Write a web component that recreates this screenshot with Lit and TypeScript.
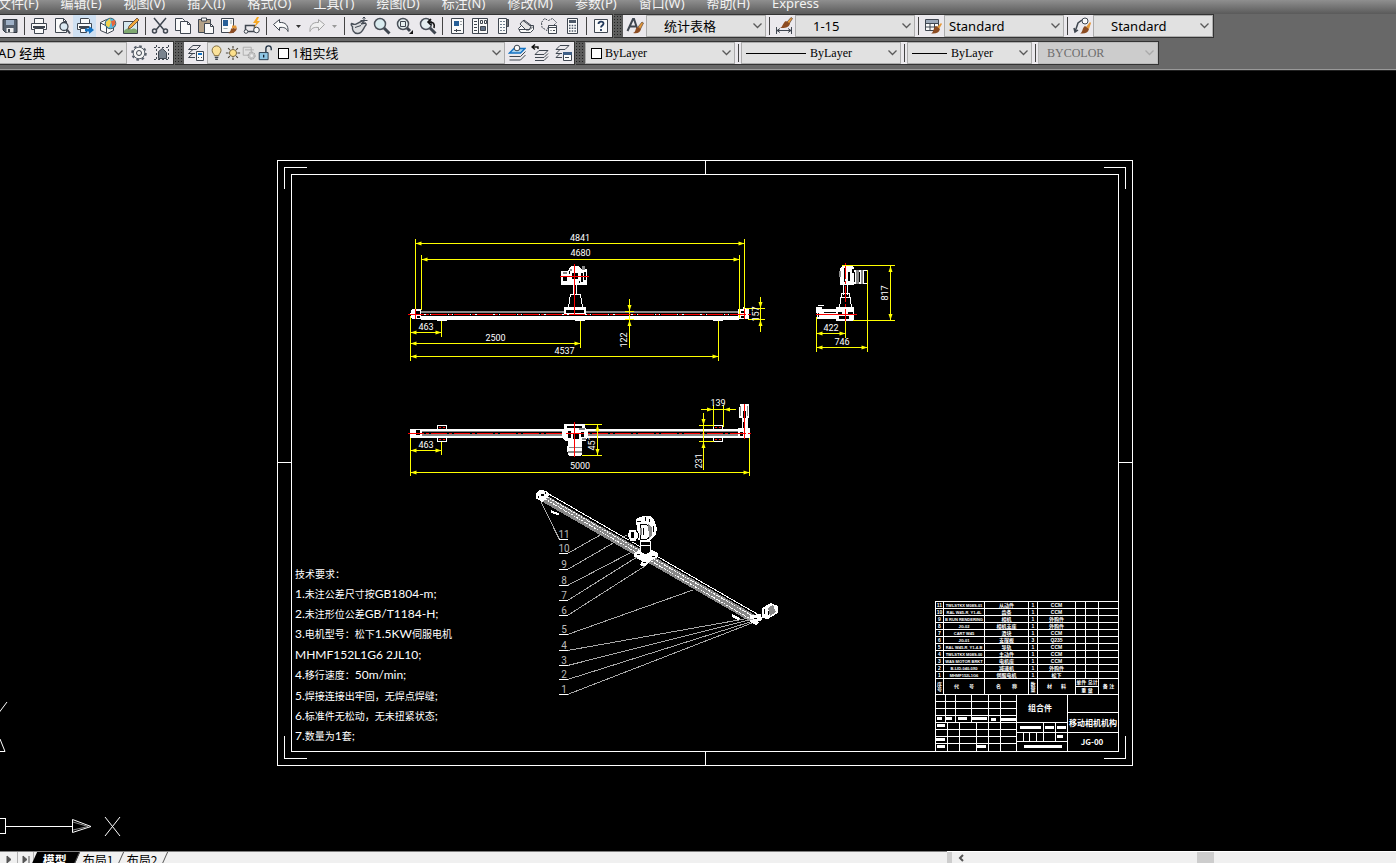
import { LitElement, html, svg, css } from "lit";
import { customElement, property } from "lit/decorators.js";

const icons: Record<string, unknown> = {
  save: svg`<path class="ink" d="M2 2.500h14v13H4.500L2 13z"/><path fill="#9fb0c6" d="M5 3h8v5H5z"/><path fill="#eee" d="M5.500 11h7v4.500h-7z"/><path fill="#3f4650" d="M7 12h2v3H7z"/>`,
  print: svg`<path class="paper" d="M4.500 6V1.500h9V6"/><path class="paper" d="M1.500 6.500h15v6h-15z"/><path fill="#3f4650" d="M3 9h12v2H3z"/><path class="paper" d="M4.500 11.500h9v5h-9z"/>`,
  preview: svg`<path class="paper" d="M2.500 1.500h8l3 3v11h-11z"/><path class="line" d="M10.500 1.500v3h3"/><circle cx="11" cy="9.500" r="4" fill="#dceaf3" stroke="#3f4650" stroke-width="1.300"/><path class="line thick" d="M14 12.500l3 4"/>`,
  publish: svg`<path class="paper" d="M4.500 6V1.500h8l1 1V6"/><path class="paper" d="M1.500 6.500h14v6h-14z"/><path fill="#3f4650" d="M3 9h10v2H3z"/><path class="paper" d="M4.500 11.500h6v4h-6z"/><path fill="#1473c4" d="M9 11.500h4V9l5 4-5 4v-2.500H9z"/>`,
  globe: svg`<path class="paper" d="M1.500 5.500l6-3 7 3v8l-6 3-7-3z"/><path class="line" d="M1.500 6l6 3v7"/><circle cx="11.500" cy="6.500" r="5.300" fill="#55b9df" stroke="#37606f"/><path fill="#f3d24b" d="M7 5l4-3.500 1 4-2 5-3-2z"/><path fill="#e8663c" d="M12 4l4-1 .5 4-3 3z"/>`,
  markup: svg`<path fill="#d5e8ef" stroke="#3f4650" d="M1.500 4.500h14v12h-14z"/><path fill="#7fa870" d="M2 14c3-4 6-1 8-2s4 0 5 1v3H2z"/><path fill="#f2a83b" stroke="#5b4434" stroke-width=".8" d="M6 12l1-3 8-8 2 2-8 8z"/>`,
  cut: svg`<path class="line mid" d="M3 1l10 12M15 1L5 13"/><circle class="line mid" cx="3.500" cy="14" r="2"/><circle class="line mid" cx="14.500" cy="14" r="2"/>`,
  copy: svg`<path class="paper" d="M1.500 1.500h7l2 2v10h-9z"/><path class="paper" d="M6.500 4.500h7l3 3v9h-10z"/><path class="line" d="M13.500 4.500v3h3"/>`,
  paste: svg`<path fill="#b3a187" stroke="#3f4650" d="M1.500 2.500h12v13h-12z"/><path class="paper" d="M4.500 1h5v3h-5z"/><path class="paper" d="M7.500 6.500h6l3 3v7h-9z"/><path class="line" d="M13.500 6.500v3h3"/>`,
  match: svg`<path class="paper" d="M1.500 1.500h12v14h-12z"/><path fill="#285f97" d="M3 3h5v6H3z"/><path stroke="#9aa" d="M10 4h2M10 6h2M3.500 11.500h4"/><path fill="#e59a3a" d="M12 8.500h4l1 3h-5z"/><path fill="#8d4c22" d="M11 11.500h6c-1 4-5 5.500-9 4.500 2-1 3-2 3-4.500z"/>`,
  block: svg`<path class="line mid" d="M2.500 8.500h9v6h-9z"/><circle class="paper" cx="3" cy="14.500" r="1.800"/><circle class="paper" cx="13.500" cy="13" r="2.800"/><path fill="#f7a823" d="M14 0l-4 6h3l-2 5 6-7h-3l2-4z"/>`,
  undo: svg`<path class="paper" d="M1.500 7.500l6-5v3c6-.5 9 3 8.500 9-1.500-3.500-4-4.500-8.500-4v3z"/>`,
  redo: svg`<path fill="#efefef" stroke="#a3a3a3" d="M16.500 7.500l-6-5v3c-6-.5-9 3-8.500 9 1.500-3.500 4-4.500 8.500-4v3z"/>`,
  pan: svg`<path fill="#dcdde0" stroke="#4a5059" stroke-width="1.400" d="M1.500 6.500c2 1 3 1.500 4.500 .5l6-3c2 0 1.500 2-1 3 3-1 6-1 5 1-3 3-3 8.500-8.500 8.500-4 0-5.500-4-5-7-1.500-1-1.500-2.500-1-3z"/><path class="line" d="M5 10.500l6-2M10.500 3.500h7M14 0v7M12.500 1.500L14 0l1.500 1.500M12.500 5.500L14 7l1.500-1.500"/>`,
  zoom: svg`<path class="line fat" d="M10.500 10.500l6 6"/><circle cx="7" cy="7" r="5.500" fill="#d9ebef" stroke="#4a5059" stroke-width="1.500"/>`,
  zoomwin: svg`<path class="line fat" d="M10 10l4 4"/><circle cx="7" cy="7" r="5.500" fill="#e5eef0" stroke="#4a5059" stroke-width="1.500"/><path class="line" d="M4.500 4.500h5v5h-5z"/><path fill="#111" d="M17 13v4h-4z"/>`,
  zoomprev: svg`<path class="line fat" d="M10.500 10.500l6 6"/><circle cx="7" cy="7" r="5.500" fill="#e5eef0" stroke="#4a5059" stroke-width="1.500"/><path fill="none" stroke="#111" stroke-width="1.600" d="M12 2L9 5l3 3M9.500 5c5-.5 6.500 2 5.500 6"/>`,
  props: svg`<path class="paper" d="M3.500 1.500h12v15h-12z"/><path fill="#285f97" d="M6 4h5v5H6z"/><path class="line" d="M12.500 4.500h1M12.500 7.500h1M6 13.500h7M8.500 12v3"/>`,
  palette: svg`<path class="paper" d="M1.500 1.500h15v15h-15z"/><path class="line" d="M7.500 1.500v15M3 4.500h3M3 7.500h3M3 10.500h3M3 13.500h3M9.500 3.500h2v3h-2zM13.500 3.500h2v3h-2z"/><path fill="#5f7088" stroke="#3f4650" d="M9.500 9.500h5v4h-5z"/>`,
  tool: svg`<path class="paper" d="M4.500 1.500h8v15h-8z"/><path stroke="#71808f" stroke-dasharray="2 1" fill="none" d="M6 4.500h5M6 7.500h5M6 10.500h5M6 13.500h5"/><path fill="#777" stroke="#3f4650" d="M12.500 2.500h2v7h-2z"/>`,
  sheet: svg`<path class="paper" d="M1.500 11.500l3-3h12v4l-3 3h-10z"/><path fill="#e4e4e4" stroke="#3f4650" d="M3 7l3-3.500 8 6-2 3.500H9z"/><path class="line" d="M6 4l1-1 8 6M2 12.500h7l4 0 3-3"/>`,
  block2: svg`<path fill="none" stroke="#3f4650" stroke-dasharray="2 1" d="M1.500 5.500l3-4 4 2 4-2 4 4-3 3H9l-2 5-5-3z"/><path class="paper" d="M8.500 8.500h8v8h-8z"/><path class="line" d="M8.500 10.500h8M10.500 13.500h1M13 13.500h2"/>`,
  calc: svg`<path class="paper" d="M4.500 1.500h10v15h-10z"/><path fill="#4d5868" d="M6 3h7v3H6z"/><path fill="none" stroke="#4d5868" stroke-width="1.500" stroke-dasharray="1.500 1.200" d="M6 8.500h7M6 11.200h7M6 14h7"/>`,
  help: svg`<path class="paper" d="M2.500 2.500h13v13h-13z"/><path fill="none" stroke="#243a5c" stroke-width="1.800" d="M6.500 7c0-3 5-3 5-.5 0 2-2.500 2-2.500 4M9 12v2"/>`,
  style: svg`<path class="line thick" d="M1.500 14L7 2h1l3 9M3.500 9.500h6"/><path fill="#e59a3a" stroke="#5b4434" stroke-width=".7" d="M12 10l4-5 1.500 1-3 6z"/><path fill="#8d4c22" d="M11 10l4 2c-1 4-4 5-8 4 3-1 2-4 4-6z"/>`,
  dim: svg`<path class="line" d="M1.500 10v7M16.500 10v7M2 13.500h14M5 11.500l-3 2 3 2M13 11.500l3 2-3 2"/><path fill="#e59a3a" stroke="#5b4434" stroke-width=".7" d="M12 5l4-4.500 1.500 1L14 7z"/><path fill="#8d4c22" d="M11 4l4 2.500c-1 4-5 5-10 4.500 3-1 3-6 6-7z"/>`,
  table: svg`<path class="paper" d="M1.500 2.500h13v11h-13z"/><path fill="#9ca8b8" d="M2 3h12v3H2z"/><path class="line" d="M1.500 6.500h13M1.500 10h13M6 6v7M10.500 6v7"/><path fill="#e59a3a" d="M13 10l4-4 1 1-3 5z"/><path fill="#8d4c22" d="M12 9l4 3c-1 4-4 5-9 4.500 3-1 2-6 5-7.500z"/>`,
  leader: svg`<path class="line mid" d="M2 15l3-9 4-3M1 11l1 4 3-2"/><circle class="paper" cx="12" cy="4" r="3"/><path fill="#e59a3a" d="M13 10l4-5 1 1-2 6z"/><path fill="#8d4c22" d="M12 9l4 3c-1 4-4 5-9 4.500 3-1 2-6 5-7.500z"/>`,
  gear: svg`<circle cx="9" cy="9" r="6.800" fill="none" stroke="#59616c" stroke-width="2" stroke-dasharray="2.600 2.740"/><circle cx="9" cy="9" r="5.800" fill="#f4f4f4" stroke="#59616c"/><circle class="line" cx="9" cy="9" r="2.500"/>`,
  space: svg`<path fill="none" stroke="#3f4650" stroke-dasharray="2 2" d="M1 3.500h16M1 15.500h16M3.500 1v16M15.500 1v16"/><path fill="#7a838e" stroke="#3f4650" d="M5.500 14.500v-7l4-3 4 4v6z"/>`,
  layerprops: svg`<path class="line" d="M6 1.500L1.500 5.500h8l4-4zM6 5.500L1.500 9.500H8M6 9.500l-4.500 4H8"/><path class="paper" d="M9.500 7.500h7v9h-7z"/><path fill="#1473c4" d="M11 9h4v2h-4z"/><path class="line" d="M11 13.500h1M14 13.500h1"/>`,
  bulb: svg`<path fill="#fbe29a" stroke="#75602e" d="M6 12c0-2-2.500-3-2.500-6a5 5 0 0 1 10 0c0 3-2.500 4-2.500 6z"/><path class="line mid" d="M6.500 14h4M7 16h3"/>`,
  sun: svg`<path stroke="#4c463c" stroke-width="1.300" d="M9 1v16M1 9h16M3.500 3.500l11 11M14.500 3.500l-11 11"/><circle cx="9" cy="9" r="5" fill="#ececec"/><circle cx="9" cy="9" r="4" fill="#fce08b" stroke="#655530"/>`,
  freeze: svg`<path fill="none" stroke="#aaa" d="M2.500 2.500h9v9h-9zM4.500 5.500h10"/><circle cx="12" cy="12" r="4" fill="#c4c4c4" stroke="#999" stroke-dasharray="2 1"/><circle cx="12" cy="12" r="1.500" fill="#eee"/>`,
  lock: svg`<path fill="none" stroke="#1e2f40" stroke-width="1.500" d="M10 8V4c0-4 6-4 6 0v2"/><path fill="#8fc6e4" stroke="#1e2f40" d="M2.500 8.500h10v8h-10z"/><path stroke="#102030" stroke-width="1.500" d="M7.500 11v3"/>`,
  laymatch: svg`<path fill="#a9d3f0" stroke="#1473c4" stroke-width="1.400" d="M6 4.500h11l-4.500 4.500h-11z"/><path class="line" d="M1.500 12.500h11l5-5M1.500 16h11l5-5"/><circle class="paper" cx="9" cy="4" r="2.800"/>`,
  layprev: svg`<path class="line" d="M8 6.500h9l-4 4H4zM4 13.500h9l4-4M4 16.500h9l4-4"/><path fill="none" stroke="#111" stroke-width="1.400" d="M1 3h6v2M4 .5L1 3l3 2.500"/>`,
  laystate: svg`<path class="line" d="M6 1.500h9l-4 4H2zM6 5.500l-4 4h6M6 9.500l-4 4h6"/><path class="paper" d="M9.500 8.500h8v8h-8z"/><path fill="#3f5f86" d="M9 8h9v3H9z"/><path class="line" d="M11 13.500h4"/>`,
};

const icon = (name: string) =>
  html`<svg class="icon" viewBox="0 0 18 18" aria-hidden="true">${icons[name]}</svg>`;

const iconStyles = css`
  .icon { width: 18px; height: 18px; flex: none; display: block; }
  .ink { fill: #56606e; stroke: #30363e; }
  .paper { fill: #fafafa; stroke: #3f4650; }
  .line { fill: none; stroke: #3f4650; }
  .mid { stroke-width: 1.5; }
  .thick { stroke-width: 2; }
  .fat { stroke-width: 3; }
`;

@customElement("cad-combo")
class CadCombo extends LitElement {
  @property() label = "";
  @property() value = "";
  @property() variant = "";
  @property({ type: Boolean }) disabled = false;

  static styles = css`
    :host { display: flex; box-sizing: border-box; height: 22px; background: #e1e1e1; border: 1px solid #acacac; }
    :host([disabled]) { background: #cccccc; border-color: #bbbbbb; }
    .box { flex: 1; min-width: 0; display: grid; align-items: center; grid-template-columns: auto 1fr; }
    select { grid-area: 1 / 2; min-width: 0; width: 100%; height: 20px; appearance: none; border: 0; margin: 0; padding: 0 20px 0 4px; background: none; color: #000; font: 13px/20px "Noto Sans", "Noto Sans CJK SC", sans-serif; }
    .chevron { grid-area: 1 / 2; justify-self: end; width: 9px; height: 6px; margin-right: 3px; pointer-events: none; fill: none; stroke: #5a5a5a; stroke-width: 1.3; }
    .indent { padding-left: 17px; }
    .inset { padding-left: 8px; }
    .serif { font-family: "Liberation Serif", serif; font-size: 12px; }
    select:disabled { color: #6d6d6d; opacity: 1; }
    :host([disabled]) .chevron { stroke: #aaa; }
  `;

  render() {
    return html`<div class="box">
      <slot></slot>
      <select class=${this.variant} aria-label=${this.label} ?disabled=${this.disabled}><option>${this.value}</option></select>
      <svg class="chevron" viewBox="0 0 9 6"><path d="M.5 .5l4 4 4-4" /></svg>
    </div>`;
  }
}

type Pt = [number, number];

@customElement("cad-drawing")
class CadDrawing extends LitElement {
  static styles = css`
    :host { display: block; background: #000; overflow: hidden; }
    .sheet { display: block; width: 100%; height: 100%; }
    .w { fill: none; stroke: #fff; }
    .g { fill: none; stroke: #8c8c8c; }
    .y { fill: none; stroke: #ff0; }
    .r { fill: none; stroke: #f00; }
    .dash { stroke-dasharray: 16 2 3 2; }
    .dots { stroke-dasharray: 2 1; }
    .fw { fill: #fff; }
    .fg { fill: #888; }
    .fy { fill: #ff0; }
    .fk { fill: #000; }
    .kw { fill: #000; stroke: #fff; }
    .wk { fill: #fff; stroke: #000; }
    .fr { fill: #f00; }
    .crisp { shape-rendering: crispEdges; }
    .dimtext { fill: #fff; font: 9px Roboto, sans-serif; text-anchor: middle; }
    .part { fill: #bbb; font: 10px Roboto, sans-serif; text-anchor: middle; }
    .note { fill: #fff; font: 10px "Noto Sans CJK SC", sans-serif; }
    .latin { font: 12px Lato, sans-serif; }
    .name { fill: #fff; font: bold 8px "Noto Sans CJK SC", sans-serif; text-anchor: middle; }
    .bom { border-collapse: collapse; table-layout: fixed; width: 184px; color: #fff; font: bold 5px/5px "Liberation Sans", "Noto Sans CJK SC", sans-serif; }
    .bom td, .bom th { border: 1px solid #fff; height: 6px; padding: 0; text-align: center; white-space: nowrap; font-weight: bold; }
    .bom td:nth-child(2) { font-size: 4px; }
    .bom tfoot th { height: 7px; }
    .spread { display: flex; justify-content: space-evenly; }
  `;

  private arrow(x: number, y: number, dx: number, dy: number) {
    const px = dy, py = dx;
    return svg`<path class="fy" d="M${x} ${y}L${x + dx * 6 + px * 2} ${y + dy * 6 + py * 2}L${x + dx * 6 - px * 2} ${y + dy * 6 - py * 2}z"/>`;
  }
  private h(x1: number, x2: number, y: number, label: string, ty: number, tx = (x1 + x2) / 2) {
    return svg`<path class="y crisp" d="M${x1} ${y}H${x2}"/>${this.arrow(x1, y, 1, 0)}${this.arrow(x2, y, -1, 0)}
      <text class="dimtext" x=${tx} y=${ty}>${label}</text>`;
  }
  private vtext(x: number, y: number, label: string) {
    return svg`<text class="dimtext" transform="translate(${x} ${y}) rotate(-90)">${label}</text>`;
  }

  private frame() {
    return svg`<g class="w crisp">
      <path d="M277.500 160.500H1132.500V765.500H277.500zM291.500 174.500H1118.500V751.500H291.500z"/>
      <path d="M705.500 160V174M705.500 751V766M277 462.500H291M1118 462.500H1132"/>
      <path d="M284.500 189V167.500H307M1104 167.500H1125.500V189M284.500 736V758.500H307M1104 758.500H1125.500V736"/>
    </g>`;
  }

  private front() {
    return svg`<g>
      <g class="crisp">
        <path class="fg" d="M421 311h318v2H421z"/><path class="fw" d="M421 316h318v4H421zM437 320h10v1H437zM575 320h10v1H575zM713 320h10v1H713z"/>
        <path class="w dots" d="M421 314.500H740"/>
        <path class="fw" d="M412 309h9v10h-9l-2-5zM738 309h5l1-4 2 4h3v10H738z"/><path class="fk" d="M416 311h4v3h-4zM417 316h3v2h-3zM741 311h4v2h-4zM741 316h3v2h-3z"/>
      </g>
      <path class="y crisp" d="M415.500 239V311M744.500 239V311M421.500 255V310M739.500 255V318M410.500 316V361M441.500 321V337M580.500 321V348M718.500 321V361M629.500 299V348M625 311.500H634M625 319.500H634M760.500 297V332M746 308.500H765M748 319.500H765"/>
      ${this.h(415.5, 744.5, 243.5, "4841", 241)}${this.h(421.5, 739.5, 259.5, "4680", 256)}
      ${this.h(410.5, 441.5, 332.5, "463", 330)}${this.h(410.5, 580.5, 343.5, "2500", 341)}${this.h(410.5, 718.5, 356.5, "4537", 354)}
      ${this.arrow(629.5, 311, 0, -1)}${this.arrow(629.5, 320, 0, 1)}${this.arrow(760.5, 308, 0, -1)}${this.arrow(760.5, 320, 0, 1)}
      ${this.vtext(627, 340, "122")}${this.vtext(759, 314, "157")}
      <g class="crisp">
        <path class="fw" d="M561 271h7l3-5h7l3 3h6v16H561z"/><path class="fg" d="M563 272h4v2h-4zM582 266h3v4h-3zM570 269h2v2h-2z"/><path class="fk" d="M563 276h4v5h-4zM581 273h2v9h-2zM584 272h2v8h-2zM572 273h6v6h-6zM569 271h1v3h-1zM579 281h1v2h-1z"/>
        <path class="w" d="M573.500 285V295M576.500 285V295M570.500 294.500H580.500L582.500 307M570.500 294L568.500 307"/>
        <path class="fw" d="M564 307h22v8H564z"/><path class="fk" d="M566 310h18v3H566z"/>
        <path class="r" d="M560 276.500H589M574.500 264V315M415.500 309V319M744.500 309V319"/><path class="r dash" d="M408 314.500H751"/>
      </g>
    </g>`;
  }

  private side() {
    return svg`<g>
      <g class="crisp">
        <path class="fw" d="M840 268l4-3h8l2 3v17H840z"/><path class="fw" d="M854 270h14v14h-14z"/>
        <path class="fk" d="M854 272h1v10h-1zM859 272h1v10h-1zM864 271h3v12h-3z"/>
        <path class="fg" d="M856 270h3v14h-3zM861 270h2v14h-2zM839 271h2v6h-2z"/><path class="fk" d="M844 268h1v14h-1zM848 272h2v9h-2zM852 269h2v4h-2z"/>
        <path class="w" d="M843.500 284V295M847.500 284V295M841.500 293.500H849.500L851.500 307.500H839.500zM840 297.500H851"/>
        <path class="fw" d="M816 307h6v2h14v-2h18v13H836v-1H817z"/><path class="fk" d="M818 313h1v4h-1zM824 312h12v1H824zM838 312h4v3h-4zM848 312h5v3h-5zM839 316h10v3H839z"/>
        <path class="w" d="M818 305.500H824M836 320.500H854"/>
        <path class="r dash" d="M845.500 263V321"/><path class="r" d="M816 314.500H857"/>
      </g>
      <path class="y crisp" d="M842 265.500H895M853 320.500H895M816.500 317V352M845.500 321V338M867.500 270V352M890.500 266V320"/>
      ${this.arrow(890.5, 266, 0, 1)}${this.arrow(890.5, 320, 0, -1)}${this.vtext(888, 293, "817")}
      ${this.h(816.5, 845.5, 333.5, "422", 331)}${this.h(816.5, 867.5, 347.5, "746", 345)}
    </g>`;
  }

  private top() {
    return svg`<g>
      <g class="crisp">
        <path class="fw" d="M421 429h318v2H421zM421 436h318v2H421z"/><path class="fg" d="M421 431h318v1H421zM421 434h318v2H421z"/>
        <path class="fw" d="M410 429h12v9H410zM738 428h12v10H738z"/><path class="fk" d="M416 430h4v5h-4zM740 432h3v4h-3z"/>
        <path class="w" d="M437.500 429V425.500H446.500V429M437.500 438V441.500H446.500V438M713.500 429V425.500H722.500V429M713.500 438V441.500H722.500V438"/>
        <path class="fr" d="M439 427h2v1h-2zM443 427h2v1h-2zM439 439h2v1h-2zM443 439h2v1h-2zM715 427h2v1h-2zM719 427h2v1h-2zM715 439h2v1h-2zM719 439h2v1h-2z"/>
        <path class="r dash" d="M408 433.500H751"/>
        <path class="fw" d="M564 424h21v4l3 2v5l-2 6H566l-4-3v-7l2-1z"/><path class="fk" d="M567 426h15v2H567zM568 431h3v7h-3zM573 434h6v5h-6zM581 432h3v5h-3z"/>
        <path class="fg" d="M579 428h6v2h-6zM582 438h4v2h-4z"/><path class="fw" d="M568 441h14v14h-1v1H569l-2-5z"/><path class="fg" d="M569 447h13v1H569zM568 451h14v2H568z"/>
        <path class="fw" d="M740 404h9v14h-1v11h-6v-11h-3v-7z"/><path class="fk" d="M743 411h3v7h-3zM743 422h1v6h-1z"/><path class="fg" d="M740 406h1v10h-1zM747 406h1v10h-1z"/>
        <path class="r" d="M574.500 422V457M744.500 404V439M566 433.500H584"/>
      </g>
      <path class="y crisp" d="M410.500 438V476M749.500 438V476M441.500 442V455M597.500 425V455M585 424.500H602M582 455.500H602M701 409.500H736M713.500 405V427M723.500 405V427M703.500 413V470M699 425.500H714M699 441.500H714"/>
      ${this.arrow(597.5, 425, 0, 1)}${this.arrow(597.5, 455, 0, -1)}${this.arrow(713, 409.5, -1, 0)}${this.arrow(724, 409.5, 1, 0)}${this.arrow(703.5, 425, 0, -1)}${this.arrow(703.5, 442, 0, 1)}
      ${this.h(410.5, 441.5, 450.5, "463", 448)}${this.h(410.5, 749.5, 472.5, "5000", 469)}
      <text class="dimtext" x="718" y="406">139</text>${this.vtext(595, 443, "451")}${this.vtext(702, 461, "231")}
    </g>`;
  }

  private iso() {
    const parts: [string, number, Pt][] = [
      ["11", 539.5, [541, 502]], ["10", 553.5, [602, 534]], ["9", 569.5, [627, 535]], ["8", 585.5, [630, 553]],
      ["7", 600.5, [637, 557]], ["6", 615.5, [645, 566]], ["5", 634.5, [693, 590]], ["4", 650.5, [750, 618]],
      ["3", 665.5, [753, 619]], ["2", 679.5, [750, 622]], ["1", 694.5, [752, 623]],
    ];
    return svg`<g class="crisp">
      <path class="fg" d="M544 494L758 616L751 622L541 501z"/>
      <path class="w" d="M548 493.500L758 614.500"/><path class="w dots" d="M547 497L756 618M545 499L752 620"/><path d="M549 495.500L756 615" stroke="#000"/>
      <path class="fw" d="M536 493l4-3 7 1 2 4-7 7-3-2-3-1zM551 510l9 4-3 1-6-2zM732 614l8 4-2 2-6-3zM750 615l11-1 1 5-6 6-6-3z"/>
      <path class="fk" d="M541 494h3v2h-3zM538 496h1v2h-1zM545 492h1v2h-1zM754 618h3v1h-3zM758 621h2v1h-2z"/>
      <path class="fw" d="M762 608l9-5 7 3v7l-10 6-6-1z"/><path class="fg" d="M768 608l5-3 3 7-6 4z"/><path class="fk" d="M764 609h1v5h-1zM768 611h1v4h-1z"/>
      <path class="fw" d="M634 553l8-4h8l8 4v4l-8 4-6 6-4-2 2-4-8-4z"/><path class="fk" d="M637 554h3v1h-3zM652 556h3v1h-3zM643 562h3v1h-3z"/>
      <path class="kw" d="M640.500 541.500h10v11l-5 2-5-2z"/><path class="w" d="M641 545.500H650"/>
      <path class="fw" d="M636 519l7-3h7l4 4 3 8-1 6-6 7h-9l-5-3 1-7z"/>
      <path class="wk" d="M640.500 524.500h6l4 3v9l-4 3h-6z"/><path class="fg" d="M648 524l4 3v8l-2 3h-1zM640 528h2v7h-2z"/>
      <path class="fk" d="M637 521h4v1h-4zM645 517h1v4h-1zM649 519h1v3h-1zM653 526h1v6h-1zM643 528h1v7h-1z"/>
      <path class="wk" d="M628.500 529.500h7l3 4v4l-3 4h-5l-3-5z"/><path class="fk" d="M631 532h3v6h-3z"/>
      ${parts.map(([, y, [x2, y2]], i) => svg`<path d="M${i ? 567.5 : 559.5} ${y}L${x2} ${y2}" fill="none" stroke="#a8a8a8"/><path class="w" d="M559 ${y}H568"/>`)}
    </g>${parts.map(([n, y]) => svg`<text class="part" x="564" y=${y - 1.5}>${n}</text>`)}`;
  }

  private notes() {
    const lines: [number, string[]][] = [
      [578, ["技术要求："]],
      [598, ["", "1.", "未注公差尺寸按", "GB1804-m;"]],
      [618, ["", "2.", "未注形位公差", "GB/T1184-H;"]],
      [638, ["", "3.", "电机型号：松下", "1.5KW", "伺服电机"]],
      [659, ["", "MHMF152L1G6 2JL10;"]],
      [679, ["", "4.", "移行速度：", "50m/min;"]],
      [700, ["", "5.", "焊接连接出牢固，无焊点焊缝", ";"]],
      [720, ["", "6.", "标准件无松动，无未扭紧状态", ";"]],
      [740, ["", "7.", "数量为", "1", "套", ";"]],
    ];
    return lines.map(([y, runs]) => svg`<text class="note" x="295" y=${y}>${runs.map((t, i) => svg`<tspan class=${i % 2 ? "latin" : ""}>${t}</tspan>`)}</text>`);
  }

  private titleBlock() {
    const rows = [
      ["11", "TWLSTKX M08S-01", "从动件", "1", "CCM"], ["10", "RAL W45-R_Y1-4L", "齿条", "1", "CCM"],
      ["9", "B RUN RENDERING", "相机", "1", "外购件"], ["8", "JG-02", "相机支座", "1", "外购件"],
      ["7", "CART W45", "滑块", "1", "CCM"], ["6", "JG-01", "支撑板", "3", "Q235"],
      ["5", "RAL W45-R_Y1-4-B", "导轨", "1", "CCM"], ["4", "TWLSTKX M08S-00", "主动件", "1", "CCM"],
      ["3", "WAS MOTOR BRKT", "电机座", "1", "CCM"], ["2", "B-LID-040-0X0", "减速机", "1", "外购件"],
      ["1", "MHMF152L1G6", "伺服电机", "1", "松下"],
    ];
    const blobs = [[937, 717, 5], [946, 717, 6], [958, 717, 9], [972, 717, 15], [991, 718, 5], [1001, 718, 15], [937, 724, 8], [936, 738, 9], [937, 745, 8], [977, 745, 9], [1020, 726, 21], [1045, 726, 9], [1057, 726, 9], [1057, 735, 6], [1024, 745, 38]];
    return svg`<foreignObject x="935" y="601" width="186" height="96">
        <table class="bom" xmlns="http://www.w3.org/1999/xhtml">
          ${html`<colgroup><col width="8" /><col width="41" /><col width="44" /><col width="9" /><col width="38" /><col width="10" /><col width="13" /><col width="20" /></colgroup>
          <tbody>${rows.map((r) => html`<tr>${r.map((c) => html`<td>${c}</td>`)}<td></td><td></td><td></td></tr>`)}</tbody>
          <tfoot>
            <tr><th rowspan="2">序<br />号</th><th rowspan="2"><div class="spread"><span>代</span><span>号</span></div></th><th rowspan="2"><div class="spread"><span>名</span><span>称</span></div></th><th rowspan="2">数<br />量</th><th rowspan="2"><div class="spread"><span>材</span><span>料</span></div></th><th colspan="2">单件 总计</th><th rowspan="2">备 注</th></tr>
            <tr><th colspan="2">重 量</th></tr>
          </tfoot>`}
        </table>
      </foreignObject>
      <g class="crisp">
        <path class="w" d="M935.500 694V751M1016.500 694V751M1067.500 694V751M935 701.500H1016M935 708.500H1016M935 715.500H1016M935 722.500H1067M935 729.500H1016M935 736.500H1016M935 743.500H1016M945.500 694V722M955.500 694V722M971.500 694V722M988.500 694V751M1000.500 694V751M947.500 722V751M959.500 722V751M976.500 722V751M1016 732.500H1118M1016 741.500H1067M1067 712.500H1118M1043.500 722V741M1055.500 722V741M1023.500 732V741M1029.500 732V741M1036.500 732V741"/>
        ${blobs.map(([x, y, w]) => svg`<rect class="fw" x=${x} y=${y} width=${w} height="3"/>`)}
      </g>
      <text class="name" x="1040" y="711">组合件</text><text class="name" x="1093" y="726">移动相机机构</text><text class="name" x="1092" y="745">JG-00</text>`;
  }

  render() {
    return html`<svg class="sheet" viewBox="0 71 1396 780" role="img" aria-label="JG-00 移动相机机构">
      ${this.frame()}${this.front()}${this.side()}${this.top()}${this.iso()}${this.notes()}${this.titleBlock()}
      <g class="w"><path class="crisp" d="M0 818.500H5.500V833.500H0M6 826.500H72"/><path d="M72.500 819.500L91 826.500L72.500 832.500zM105 817L120 836M120 817L105 836M-2 714L7 702M0 739L5 751.500H0"/></g>
      <path class="g" d="M73 822L88 826.500M73 830L88 826.500"/>
    </svg>`;
  }
}

@customElement("app-root")
class AppRoot extends LitElement {
  static styles = [iconStyles, css`
    :host { display: flex; flex-direction: column; height: 100vh; overflow: hidden; background: #686868; font: 13px/18px "Noto Sans", "Noto Sans CJK SC", sans-serif; }
    button { border: 0; margin: 0; padding: 0; background: none; font: inherit; color: inherit; }
    .menu { flex: none; height: 14px; display: flex; align-items: flex-end; gap: 22px; overflow: hidden; background: linear-gradient(#8f8f8f, #5a5a5a); color: #f2f2f2; }
    .menu button { flex: none; height: 20px; line-height: 18px; padding-bottom: 2px; white-space: nowrap; }
    .menu button:first-child { margin-left: -2px; }
    .row { flex: none; display: flex; gap: 1px; margin-bottom: 3px; }
    .bar { display: flex; align-items: center; height: 24px; box-sizing: border-box; border: 1px solid #333; border-left: 0; background: #ebe9ed; }
    .clipped { margin-left: -2px; }
    .workspace { margin-left: -44px; }
    .btn { flex: none; width: 23px; height: 22px; display: grid; place-items: center; }
    .active { background: #cfe0f2; }
    .drop { flex: none; width: 13px; height: 22px; display: grid; place-items: center; }
    .caret { width: 5px; height: 3px; fill: #333; }
    .caret.off { fill: #999; }
    .sep { flex: none; width: 6px; height: 18px; background: linear-gradient(#444, #444) center / 1px 100% no-repeat; }
    .grip { flex: none; width: 9px; height: 22px; background: radial-gradient(circle, #222 34%, transparent 40%) 2px 3px / 3px 3px repeat, #5c5c5c; }
    .combo { width: 120px; }
    .wide { width: 298px; }
    .color { width: 150px; }
    .ltype { width: 160px; }
    .weight { width: 125px; }
    .space { width: 171px; }
    .state { display: flex; align-items: center; margin-left: 1px; }
    .state .icon { width: 16px; height: 16px; }
    .swatch { width: 9px; height: 9px; border: 1px solid #000; background: #fff; margin: 0 -1px 0 5px; }
    .stroke { width: 60px; height: 1px; background: #000; margin: 0 -13px 0 4px; }
    .stroke.short { width: 35px; }
    .edge { flex: none; height: 1px; margin-top: 1px; background: #999; border-bottom: 1px solid #222; }
    .canvas { flex: 1; min-height: 0; }
    .status { flex: none; height: 12px; display: flex; background: #f0f0f0; overflow: hidden; }
    .tabs { flex: 947; display: flex; border-top: 1px solid #808080; color: #000; font: 12px/13px "Noto Sans CJK SC", sans-serif; }
    .nav { width: 16px; height: 14px; border-right: 1px solid #b0b0b0; display: grid; place-items: center; }
    .nav svg { width: 8px; height: 9px; fill: #555; stroke: #555; }
    .nav:first-child { width: 18px; }
    .tab { height: 14px; padding: 0 6px; border-right: 1px solid #555; transform: skewX(-24deg); white-space: nowrap; }
    .tab span { display: block; transform: skewX(24deg); }
    .tab.on { background: #000; color: #fff; font-weight: bold; padding: 0 9px; }
    .scroll { flex: 449; display: flex; border-top: 1px solid #fff; }
    .split { width: 5px; background: #cdcdcd; }
    .prev { width: 18px; height: 11px; display: grid; place-items: center; }
    .prev svg { width: 6px; height: 8px; fill: none; stroke: #555; stroke-width: 2; }
    .thumb { width: 17px; background: #cdcdcd; margin-left: auto; margin-right: 182px; }
  `];

  private btn(name: string, label: string, cls = "") {
    return html`<button class="btn ${cls}" title=${label} aria-label=${label}>${icon(name)}</button>`;
  }
  private drop(off = false) {
    return html`<button class="drop" aria-label="展开" ?disabled=${off}><svg class="caret ${off ? "off" : ""}" viewBox="0 0 5 3"><path d="M0 0h5L2.500 3z" /></svg></button>`;
  }

  render() {
    const sep = html`<span class="sep"></span>`;
    const b = (n: string, l: string) => this.btn(n, l);
    const menu = ["文件(F)", "编辑(E)", "视图(V)", "插入(I)", "格式(O)", "工具(T)", "绘图(D)", "标注(N)", "修改(M)", "参数(P)", "窗口(W)", "帮助(H)", "Express"];
    return html`
      <nav class="menu">${menu.map((m) => html`<button>${m}</button>`)}</nav>
      <div class="row">
        <div class="bar clipped">
          ${b("save", "保存")}${sep}${b("print", "打印")}${b("preview", "打印预览")}${this.btn("publish", "发布", "active")}${b("globe", "三维打印")}${b("markup", "标记")}${sep}
          ${b("cut", "剪切")}${b("copy", "复制")}${b("paste", "粘贴")}${b("match", "特性匹配")}${b("block", "块编辑器")}${sep}
          ${b("undo", "放弃")}${this.drop()}${b("redo", "重做")}${this.drop(true)}${sep}
          ${b("pan", "平移")}${b("zoom", "缩放")}${b("zoomwin", "窗口缩放")}${b("zoomprev", "上一个")}${sep}
          ${b("props", "特性")}${b("palette", "设计中心")}${b("tool", "工具选项板")}${b("sheet", "图纸集")}${b("block2", "标记集")}${b("calc", "计算器")}${sep}${b("help", "帮助")}
        </div>
        <div class="bar">
          <span class="grip"></span>
          ${b("style", "文字样式")}<cad-combo class="combo" label="文字样式" value="统计表格" variant="indent"></cad-combo>${sep}
          ${b("dim", "标注样式")}<cad-combo class="combo" label="标注样式" value="1-15" variant="indent"></cad-combo>${sep}
          ${b("table", "表格样式")}<cad-combo class="combo" label="表格样式" value="Standard"></cad-combo>${sep}
          ${b("leader", "多重引线样式")}<cad-combo class="combo" label="多重引线样式" value="Standard" variant="indent"></cad-combo>
        </div>
      </div>
      <div class="row">
        <div class="bar workspace">
          <cad-combo class="space" label="工作空间" value="AutoCAD 经典"></cad-combo>${b("gear", "工作空间设置")}${b("space", "我的工作空间")}
        </div>
        <div class="bar">
          <span class="grip"></span>${b("layerprops", "图层特性")}
          <cad-combo class="wide" label="图层" value="1粗实线"><span class="state">${icon("bulb")}${icon("sun")}${icon("freeze")}${icon("lock")}<i class="swatch"></i></span></cad-combo>
          ${b("laymatch", "置为当前")}${b("layprev", "上一图层")}${b("laystate", "图层状态")}
        </div>
        <div class="bar">
          <span class="grip"></span>
          <cad-combo class="color" label="颜色" value="ByLayer" variant="serif"><i class="swatch"></i></cad-combo>${sep}
          <cad-combo class="ltype" label="线型" value="ByLayer" variant="serif indent"><i class="stroke"></i></cad-combo>${sep}
          <cad-combo class="weight" label="线宽" value="ByLayer" variant="serif indent"><i class="stroke short"></i></cad-combo>${sep}
          <cad-combo class="combo" label="打印样式" value="BYCOLOR" variant="serif inset" disabled></cad-combo>
        </div>
      </div>
      <div class="edge"></div>
      <cad-drawing class="canvas"></cad-drawing>
      <footer class="status">
        <div class="tabs">
          <button class="nav" aria-label="下一个"><svg viewBox="0 0 8 9"><path d="M2 1l4 3.500-4 3.500z" /></svg></button>
          <button class="nav" aria-label="最后一个"><svg viewBox="0 0 8 9"><path d="M1 1l4 3.500L1 8zM7 1v7" /></svg></button>
          <button class="tab on"><span>模型</span></button><button class="tab"><span>布局1</span></button><button class="tab"><span>布局2</span></button>
        </div>
        <div class="scroll"><span class="split"></span><button class="prev" aria-label="向左滚动"><svg viewBox="0 0 6 8"><path d="M5 1L2 4l3 3" /></svg></button><span class="thumb"></span></div>
      </footer>`;
  }
}
